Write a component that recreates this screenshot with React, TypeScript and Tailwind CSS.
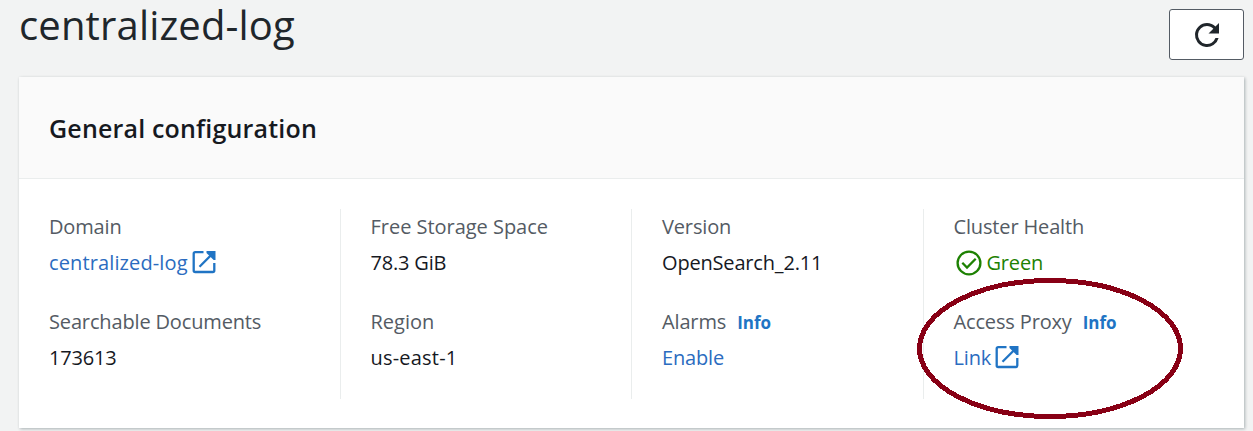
import type { ReactNode } from "react";

function ExternalIcon() {
  return (
    <svg className="mb-[2px] ml-1 h-6 w-6 shrink-0" viewBox="0 0 24 24" fill="none" stroke="#2074c4" strokeWidth="2.3">
      <path d="M11.5 2.2H3.2Q1.7 2.2 1.7 3.7V20.5Q1.7 22 3.2 22H20.8Q22.3 22 22.3 20.5V13" />
      <path d="M7.5 16.7L20.5 3.7" />
      <path d="M14.5 1H23.5V10H21.6L14.5 2.9Z" fill="#2074c4" stroke="none" />
    </svg>
  );
}

function CheckIcon() {
  return (
    <svg className="mr-[5px] ml-[2px] h-[26px] w-[26px] shrink-0" viewBox="0 0 26 26" fill="none" stroke="#1d8102" strokeWidth="2.3">
      <circle cx="13" cy="13" r="11.4" />
      <path d="M6.3 12.8L11 17.5L19.7 8.8" />
    </svg>
  );
}

function Item({ label, info, children }: { label: ReactNode; info?: boolean; children: ReactNode }) {
  return (
    <div className="h-[95px]">
      <div className="flex h-9 items-center tracking-[-0.15px] text-[#545b64]">
        {label}
        {info && <a className="ml-[11px] pt-[2px] text-[17px] font-bold tracking-normal text-[#2074c4]">Info</a>}
      </div>
      <div className="flex h-9 items-center tracking-[-0.18px] text-[#16191f]">{children}</div>
    </div>
  );
}

export default function App() {
  return (
    <div className="relative flex h-[431px] w-[1253px] flex-col overflow-hidden bg-[#f2f3f3] pl-[19px] font-['Open_Sans','Noto_Sans',sans-serif] text-[20px] whitespace-nowrap text-[#16191f]">
      <header className="flex h-[77px] justify-between pr-[9px]">
        <h1 className="text-[40px] leading-[50px] tracking-[0.15px] text-[#20262b]">centralized-log</h1>
        <button className="mt-[9px] flex h-[51px] w-[75px] items-center justify-center rounded-[3px] border border-[#545b64] bg-white">
          <svg className="h-9 w-9" viewBox="0 0 24 24" fill="#20262b">
            <path d="M17.65 6.35A7.958 7.958 0 0 0 12 4a8 8 0 1 0 7.73 10h-2.08A6 6 0 1 1 12 6c1.66 0 3.14.69 4.22 1.78L13 11h7V4z" />
          </svg>
        </button>
      </header>
      <section className="h-[351px] w-[1225px] bg-white shadow-[1px_1px_3px_0px_rgba(0,28,36,0.3)]">
        <div className="flex h-[102px] items-center border-b border-[#eaeded] bg-[#fafafa] pt-[3px] pl-[30px]">
          <h2 className="text-[25px] font-semibold tracking-[0.18px]">General configuration</h2>
        </div>
        <div className="mt-[30px] flex h-[190px]">
          <div className="w-[322px] border-r border-[#eaeded] pl-[30px]">
            <Item label="Domain"><a className="tracking-[0.12px] text-[#2b6cc0]">centralized-log</a><ExternalIcon /></Item>
            <Item label="Searchable Documents">173613</Item>
          </div>
          <div className="w-[291px] border-r border-[#eaeded] pl-[29.5px]">
            <Item label={<span className="tracking-[-0.03px]">Free Storage Space</span>}>78.3 GiB</Item>
            <Item label={<span className="tracking-normal">Region</span>}><span className="tracking-[0.2px]">us-east-1</span></Item>
          </div>
          <div className="w-[292px] border-r border-[#eaeded] pl-[30px]">
            <Item label="Version">OpenSearch_2.11</Item>
            <Item label="Alarms" info><a className="text-[#2b6cc0]">Enable</a></Item>
          </div>
          <div className="pl-[29.5px]">
            <Item label="Cluster Health"><CheckIcon /><span className="text-[#1d8102]">Green</span></Item>
            <Item label="Access Proxy" info><a className="text-[#2b6cc0]">Link</a><ExternalIcon /></Item>
          </div>
        </div>
      </section>
      <svg className="pointer-events-none absolute top-[276px] left-[916px] h-[144px] w-[270px]" viewBox="0 0 270 144" fill="none">
        <ellipse cx="134" cy="72.5" rx="130.5" ry="68" stroke="#880015" strokeWidth="5" shapeRendering="crispEdges" />
      </svg>
    </div>
  );
}
